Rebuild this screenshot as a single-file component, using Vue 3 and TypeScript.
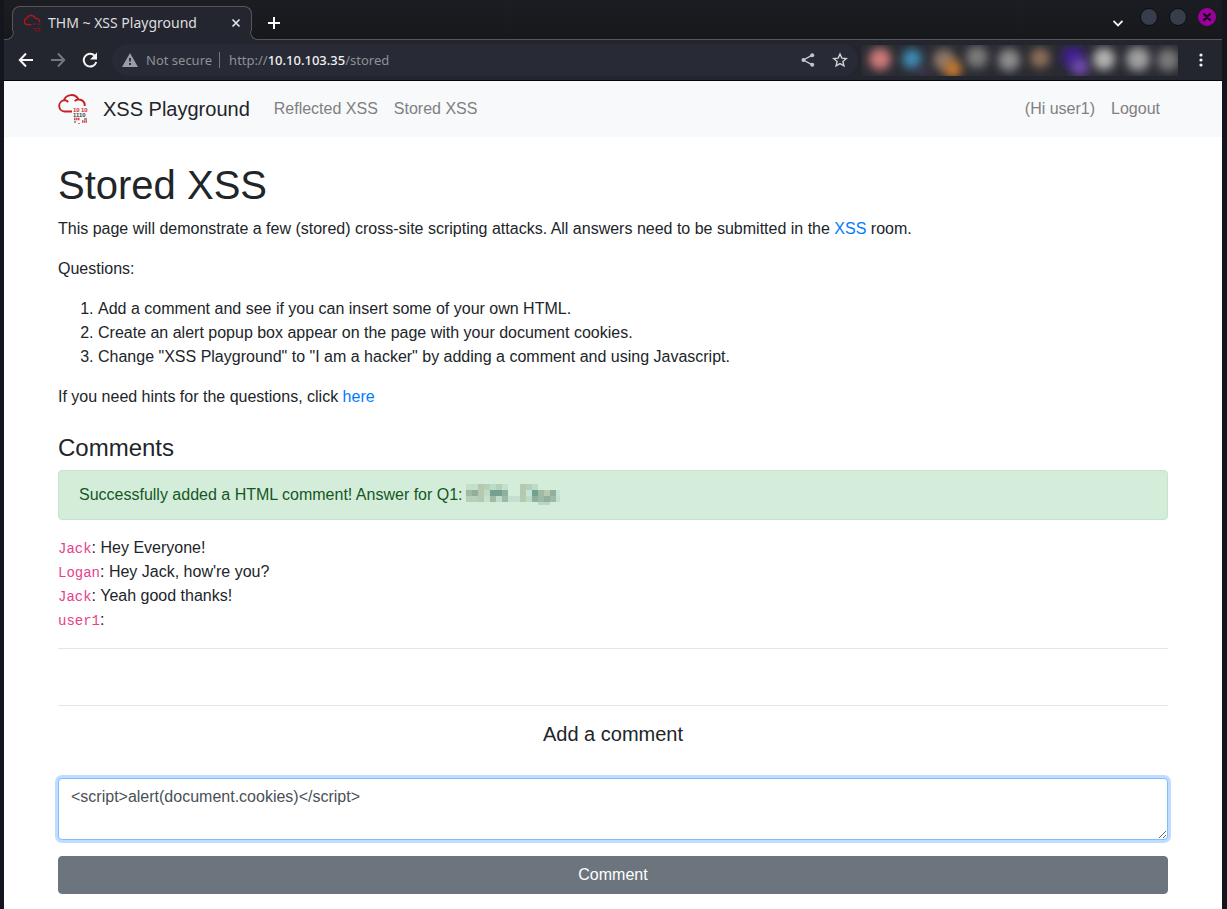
<script setup lang="ts">
import { ref } from 'vue'

interface Comment {
  author: string
  text: string
}

interface Tile {
  x: number
  y: number
  fill: string
}

const comments: Comment[] = [
  { author: 'Jack', text: ' Hey Everyone!' },
  { author: 'Logan', text: " Hey Jack, how're you?" },
  { author: 'Jack', text: ' Yeah good thanks!' },
  { author: 'user1', text: '' },
]

const questions: string[] = [
  'Add a comment and see if you can insert some of your own HTML.',
  'Create an alert popup box appear on the page with your document cookies.',
  'Change "XSS Playground" to "I am a hacker" by adding a comment and using Javascript.',
]

const draft = ref('<script>alert(document.cookies)</' + 'script>')

const extensions = [
  { x: 19, y: 14, r: 11, fill: '#d07c7a' },
  { x: 51, y: 14, r: 10, fill: '#3f8cb6' },
  { x: 62, y: 26, r: 5, fill: '#4c3a58' },
  { x: 83, y: 15, r: 11, fill: '#8c776b' },
  { x: 92, y: 24, r: 9, fill: '#c87a30' },
  { x: 116, y: 12, r: 11, fill: '#7c7c7c' },
  { x: 148, y: 15, r: 11, fill: '#8e8e8e' },
  { x: 179, y: 13, r: 10, fill: '#8f6f59' },
  { x: 212, y: 12, r: 11, fill: '#3f1f92' },
  { x: 219, y: 22, r: 9, fill: '#704cab' },
  { x: 243, y: 14, r: 11, fill: '#b4b4b4' },
  { x: 277, y: 14, r: 12, fill: '#a0a0a0' },
  { x: 307, y: 15, r: 11, fill: '#7a7a7a' },
]

const palette: Record<string, string> = {
  a: '#c5dfcf',
  b: '#b5d0b9',
  c: '#bcdcc9',
  d: '#8fb09a',
  e: '#74a08f',
  f: '#a0b9a4',
  g: '#b6c9ae',
  h: '#c6e3d7',
}

const mosaic: string[] = [
  'aagbcba..gbc....',
  'fdgceed..ghefgdh',
  'bbgafcfaagcdfdfa',
]

const tiles: Tile[] = mosaic.flatMap((row, y) =>
  [...row].flatMap((key, x) => (key === '.' ? [] : [{ x: x * 6, y: y * 6, fill: palette[key] }])),
)
</script>

<template>
  <div class="window">
    <header class="tabstrip">
      <div class="tab">
        <svg class="favicon" viewBox="0 0 32 32" aria-hidden="true">
          <path d="M15 19H8A6 6 0 0 1 7 7.200 8.200 8.200 0 0 1 22 8a6 6 0 0 1 7.500 7" fill="none" stroke="#b3161c" stroke-width="2.400" />
          <path d="M18 18h5M26 18h5M18 26h5M25 26h6M22 30h4M28 30h3" stroke="#8d161c" stroke-width="2" />
        </svg>
        <span class="tab-title">THM ~ XSS Playground</span>
        <button class="icon-button tab-close" type="button" aria-label="Close tab">
          <svg width="10" height="10" viewBox="0 0 10 10"><path d="M1.500 1.500l7 7M8.500 1.500l-7 7" stroke="#e3e3e5" stroke-width="1.700" /></svg>
        </button>
      </div>
      <button class="icon-button new-tab" type="button" aria-label="New tab">
        <svg width="12" height="12" viewBox="0 0 12 12"><path d="M6 0v12M0 6h12" stroke="#fff" stroke-width="2" /></svg>
      </button>
      <div class="window-controls">
        <button class="icon-button chevron" type="button" aria-label="Search tabs">
          <svg width="10" height="8" viewBox="0 0 10 8"><path d="M0.500 2l4.500 4.500L9.500 2" fill="none" stroke="#f2f2f2" stroke-width="1.800" /></svg>
        </button>
        <button class="icon-button dot" type="button" aria-label="Minimize"></button>
        <button class="icon-button dot" type="button" aria-label="Maximize"></button>
        <button class="icon-button dot dot-close" type="button" aria-label="Close">
          <svg width="8" height="8" viewBox="0 0 8 8"><path d="M1 1l6 6M7 1L1 7" stroke="#16041a" stroke-width="2.400" stroke-linecap="round" /></svg>
        </button>
      </div>
    </header>

    <div class="toolbar">
      <button class="icon-button" type="button" aria-label="Back">
        <svg width="16" height="16" viewBox="0 0 16 16"><path d="M15 8H2M8 1.500L1.800 8 8 14.500" fill="none" stroke="#f4f4f4" stroke-width="2" /></svg>
      </button>
      <button class="icon-button" type="button" aria-label="Forward">
        <svg width="16" height="16" viewBox="0 0 16 16"><path d="M1 8h13M8 1.500L14.200 8 8 14.500" fill="none" stroke="#75777d" stroke-width="2" /></svg>
      </button>
      <button class="icon-button" type="button" aria-label="Reload">
        <svg width="16" height="16" viewBox="0 0 16 16">
          <path d="M14.300 10A6.400 6.400 0 1 1 12.600 3.500" fill="none" stroke="#f4f4f4" stroke-width="2" />
          <path d="M15 0.500v7H8z" fill="#f4f4f4" />
        </svg>
      </button>
      <div class="omnibox">
        <svg class="warning" width="16" height="14" viewBox="0 0 16 14" aria-hidden="true">
          <path d="M8 0l8 14H0z" fill="#9b9da3" />
          <path d="M8 5v3.500M8 10v2" stroke="#282a35" stroke-width="1.800" />
        </svg>
        <span class="security">Not secure</span>
        <span class="url">http://<b>10.10.103.35</b>/stored</span>
        <button class="icon-button share" type="button" aria-label="Share">
          <svg width="14" height="14" viewBox="0 0 14 14">
            <path d="M11.200 2.200L2.500 7l8.700 4.800" fill="none" stroke="#c6c7ca" stroke-width="1.400" />
            <circle cx="11.200" cy="2.300" r="2" fill="#c6c7ca" />
            <circle cx="2.500" cy="7" r="2" fill="#c6c7ca" />
            <circle cx="11.200" cy="11.700" r="2" fill="#c6c7ca" />
          </svg>
        </button>
        <button class="icon-button" type="button" aria-label="Bookmark this page">
          <svg width="16" height="16" viewBox="0 0 16 16">
            <path d="M8 2l1.800 4.100 4.500.4-3.400 3 1 4.400L8 11.600l-3.900 2.300 1-4.400-3.400-3 4.500-.4z" fill="none" stroke="#d0d1d4" stroke-width="1.400" />
          </svg>
        </button>
      </div>
      <svg class="extensions" width="317" height="31" viewBox="0 0 317 31" aria-hidden="true">
        <defs>
          <filter id="soften" x="-80%" y="-80%" width="260%" height="260%"><feGaussianBlur stdDeviation="5" /></filter>
        </defs>
        <rect width="317" height="31" fill="#2a2b32" />
        <circle v-for="(item, i) in extensions" :key="i" :cx="item.x" :cy="item.y" :r="item.r" :fill="item.fill" filter="url(#soften)" />
      </svg>
      <button class="icon-button menu" type="button" aria-label="Menu">
        <svg width="4" height="14" viewBox="0 0 4 14" fill="#f2f2f2"><circle cx="2" cy="2" r="1.600" /><circle cx="2" cy="7" r="1.600" /><circle cx="2" cy="12" r="1.600" /></svg>
      </button>
    </div>

    <nav class="navbar">
      <div class="container nav-row">
        <a class="brand" href="#">
          <svg class="logo" width="30" height="30" viewBox="0 0 30 30" aria-hidden="true">
            <path d="M14 17.500H6.500a5.600 5.600 0 0 1-.7-11.100A8 8 0 0 1 20.500 5.500a5.800 5.800 0 0 1 6.200 6.500M5.800 6.400c1.800-.3 3.300.4 4.400 1.600M20.500 5.500c-1.500 0-2.800.5-3.800 1.600" fill="none" stroke="#c81f27" stroke-width="1.900" />
            <g class="bits">
              <text x="15" y="18" fill="#cf2a31">10</text>
              <text x="23" y="18" fill="#cf2a31">10</text>
              <text x="15" y="23" fill="#4a4144">1110</text>
            </g>
            <path d="M16 25h6M24 27.500h5" stroke="#d3464c" stroke-width="2.500" stroke-dasharray="1.500 0.500" />
            <path d="M26 25h3M16 28h2" stroke="#77777b" stroke-width="1.500" />
            <path d="M20 30h2" stroke="#d3464c" stroke-width="1.500" />
          </svg>
          <span>XSS Playground</span>
        </a>
        <a class="nav-link" href="#reflected">Reflected XSS</a>
        <a class="nav-link" href="#stored">Stored XSS</a>
        <span class="nav-link user">(Hi user1)</span>
        <a class="nav-link" href="#logout">Logout</a>
      </div>
    </nav>

    <main class="container content">
      <h1>Stored XSS</h1>
      <p>This page will demonstrate a few (stored) cross-site scripting attacks. All answers need to be submitted in the <a href="#room">XSS</a> room.</p>
      <p>Questions:</p>
      <ol>
        <li v-for="question in questions" :key="question">{{ question }}</li>
      </ol>
      <p>If you need hints for the questions, click <a href="#hints">here</a></p>

      <h2>Comments</h2>
      <div class="alert" role="status">
        <span>Successfully added a HTML comment! Answer for Q1:</span>
        <svg class="mosaic" width="94" height="22" viewBox="0 0 94 22" shape-rendering="crispEdges" aria-hidden="true">
          <rect v-for="(tile, i) in tiles" :key="i" :x="tile.x" :y="tile.y" width="6" height="6" :fill="tile.fill" />
          <rect x="72" y="18" width="12" height="3" fill="#bcd5c2" />
        </svg>
      </div>
      <div v-for="(comment, i) in comments" :key="i" class="comment"><code>{{ comment.author }}</code>:{{ comment.text }}</div>
      <hr />
      <hr class="second-rule" />
      <form @submit.prevent>
        <label for="comment">Add a comment</label>
        <textarea id="comment" v-model="draft" rows="2" spellcheck="false"></textarea>
        <button class="submit" type="submit">Comment</button>
      </form>
    </main>
  </div>
</template>

<style>
html {
  background: #14161e;
}

body {
  margin: 0;
  overflow: hidden;
}
</style>

<style scoped>
* {
  box-sizing: border-box;
}

.window {
  min-height: 100vh;
  margin: 0 5px 0 4px;
  background: #fff;
  color: #212529;
  font: 16px/24px "Liberation Sans", Arial, sans-serif;
}

.icon-button {
  display: flex;
  flex: none;
  align-items: center;
  justify-content: center;
  padding: 0;
  border: 0;
  background: none;
}

.tabstrip {
  display: flex;
  height: 40px;
  padding: 6px 6px 0 8px;
  background: linear-gradient(#1c1d22, #17181c);
  box-shadow: inset 0 -1px #56565c;
}

.tab {
  position: relative;
  display: flex;
  align-items: center;
  width: 240px;
  padding: 0 10px 2px;
  border: 1px solid #56565c;
  border-bottom: 0;
  border-radius: 8px 8px 0 0;
  background: #23252f;
  color: #dededf;
  font: 14px/20px "Noto Sans", sans-serif;
}

.tab::before,
.tab::after {
  position: absolute;
  bottom: 0;
  width: 8px;
  height: 8px;
  border-bottom: 1px solid #56565c;
  background: #18191d;
  box-shadow: 0 4px #23252f;
  clip-path: inset(0);
  content: "";
}

.tab::before {
  right: 100%;
  border-right: 1px solid #56565c;
  border-bottom-right-radius: 8px;
  margin-right: -1px;
}

.tab::after {
  left: 100%;
  border-left: 1px solid #56565c;
  border-bottom-left-radius: 8px;
  margin-left: -1px;
}

.favicon {
  width: 18px;
  height: 18px;
}

.tab-title {
  flex: 1;
  margin-left: 7px;
  white-space: nowrap;
}

.new-tab {
  width: 28px;
  margin-left: 8px;
}

.window-controls {
  display: flex;
  align-items: flex-start;
  gap: 11px;
  margin-left: auto;
}

.chevron {
  height: 34px;
  margin-right: 6px;
}

.dot {
  width: 18px;
  height: 18px;
  margin-top: 2px;
  border: 1px solid #0b0c10;
  border-radius: 50%;
  background: #383d4b;
}

.dot-close {
  border-color: #9c009c;
  background: #9c009c;
}

.toolbar {
  display: flex;
  align-items: center;
  gap: 16px;
  height: 41px;
  padding: 0 19px 0 14px;
  border-bottom: 1px solid #050507;
  background: #23252f;
}

.omnibox {
  display: flex;
  flex: 1;
  align-items: center;
  height: 32px;
  margin-left: -2px;
  padding: 0 10px;
  border-radius: 16px;
  background: #282a35;
  color: #8e9196;
  font: 13px/20px "Noto Sans", sans-serif;
}

.security {
  margin-left: 8px;
  padding-right: 7px;
  border-right: 1px solid #74767c;
  line-height: 16px;
}

.url {
  margin-left: 9px;
}

.url b {
  color: #f1f1f2;
  font-weight: 500;
}

.share {
  margin-right: 17px;
  margin-left: auto;
}

.extensions {
  flex: none;
  margin-left: -13px;
}

.menu {
  margin-left: 5px;
}

.container {
  width: 100%;
  max-width: 1140px;
  margin: 0 auto;
  padding: 0 15px;
}

.navbar {
  padding: 8px 0;
  background: #f8f9fa;
}

.nav-row {
  display: flex;
  align-items: center;
  height: 40px;
}

.brand {
  display: flex;
  align-items: center;
  gap: 15px;
  margin-right: 16px;
  color: #212529;
  font-size: 20px;
  text-decoration: none;
}

.bits {
  font: bold 6px "Liberation Sans", Arial, sans-serif;
}

.nav-link {
  padding: 0 8px;
  color: #7f8081;
  text-decoration: none;
}

.user {
  margin-left: auto;
}

.content {
  padding-top: 24px;
  padding-bottom: 15px;
}

h1,
h2 {
  margin: 0 0 8px;
  font-weight: 400;
}

h1 {
  font-size: 40px;
  line-height: 48px;
}

h2 {
  margin-top: 24px;
  font-size: 24px;
  line-height: 29px;
}

p,
ol {
  margin: 0 0 16px;
}

ol {
  padding-left: 40px;
}

.content a {
  color: #007bff;
  text-decoration: none;
}

.alert {
  display: flex;
  align-items: center;
  gap: 3px;
  height: 50px;
  margin-bottom: 16px;
  padding: 0 20px;
  border: 1px solid #c3e6cb;
  border-radius: 4px;
  background: #d4edda;
  color: #155724;
}

.mosaic {
  flex: none;
}

.comment {
  height: 24px;
}

code {
  color: #e83e8c;
  font: 14px "Liberation Mono", monospace;
}

hr {
  margin: 16px 0;
  border: 0;
  border-top: 1px solid #e5e5e5;
}

.second-rule {
  margin-top: 56px;
}

form {
  display: flex;
  flex-direction: column;
}

label {
  margin-bottom: 32px;
  font-size: 20px;
  text-align: center;
}

textarea {
  display: block;
  width: 100%;
  height: 62px;
  margin: 0 0 16px;
  padding: 6px 12px;
  border: 1px solid #80bdff;
  border-radius: 4px;
  outline: 0;
  background: #fff;
  box-shadow: 0 0 0 3px #bfdeff;
  color: #495057;
  font: inherit;
  resize: vertical;
}

.submit {
  height: 38px;
  border: 1px solid #6c757d;
  border-radius: 4px;
  background: #6c757d;
  color: #fff;
  font: inherit;
}
</style>
